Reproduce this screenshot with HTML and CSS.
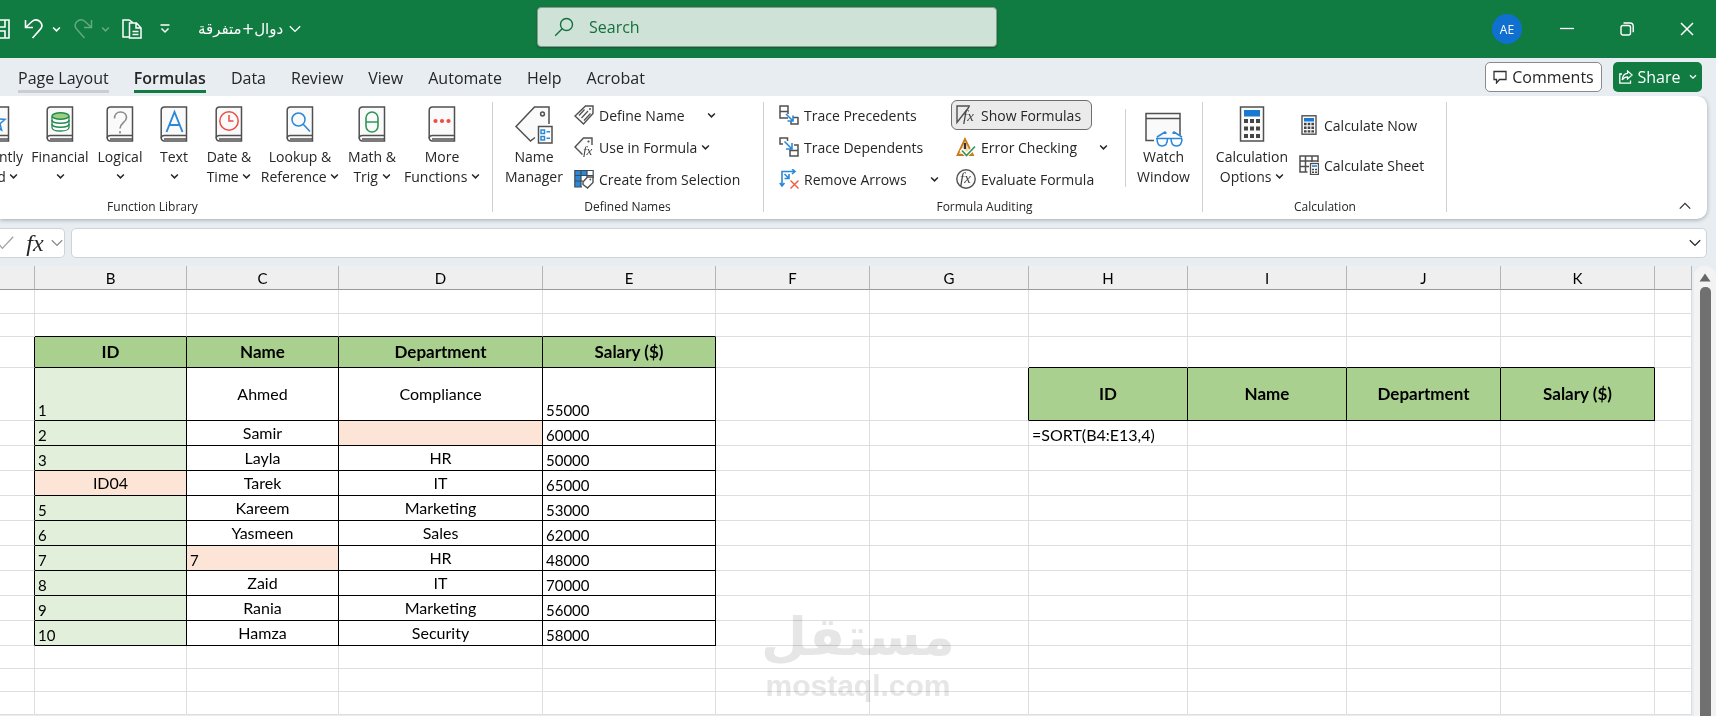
FILE: index.html
```html
<!DOCTYPE html>
<html lang="en">
<head>
    <meta charset="UTF-8">
    <meta name="viewport" content="width=device-width, initial-scale=1.0">
    <title>دوال+متفرقة - Excel</title>
    <link rel="stylesheet" href="styles.css">
</head>
<body>
    <!-- Shared icon shapes -->
    <svg class="defs" aria-hidden="true">
        <symbol id="chevron" viewBox="0 0 8 6"><path d="M1 1.2l3 3 3-3" fill="none" stroke="currentColor" stroke-width="1.3"/></symbol>
        <symbol id="chevron-wide" viewBox="0 0 12 8"><path d="M.8 1.2L6 6.4l5.2-5.2" fill="none" stroke="currentColor" stroke-width="1.3"/></symbol>
        <symbol id="book" viewBox="0 0 28 36">
            <path d="M4.500 1H26.500V35H4.500C2.500 35 1.200 33.700 1.200 31.800V4.200C1.200 2.200 2.500 1 4.500 1z" fill="#fafafa" stroke="#505050" stroke-width="1.500"/>
            <path d="M1.200 32.500C1.200 30.500 2.500 29.500 4.500 29.500H26.500M4 33H26" fill="none" stroke="#505050" stroke-width="1.400"/>
        </symbol>
    </svg>

    <header class="titlebar">
        <div class="quick">
            <button class="qbtn save" aria-label="Save"><svg viewBox="0 0 20 20"><path d="M1 1h18v18H4l-3-3zM5 1v7h10V1M5 19v-7h10v7" fill="none" stroke="#fff" stroke-width="1.600"/></svg></button>
            <button class="qbtn undo" aria-label="Undo"><svg viewBox="0 0 20 20"><path d="M1.500 1v7.500H9M2 8L8 2.500C11 0 14 .8 16 2.600c2.500 2.500 2.500 5.500 0 8L8.500 19" fill="none" stroke="#fff" stroke-width="1.600"/></svg></button>
            <button class="qdrop" aria-label="Undo list"><svg><use href="#chevron"/></svg></button>
            <button class="qbtn redo" aria-label="Redo"><svg viewBox="0 0 20 20"><path d="M18.500 1v7.500H11M18 8l-6-5.500C9 0 6 .8 4 2.600c-2.500 2.500-2.500 5.500 0 8L11.500 19" fill="none" stroke="#fff" stroke-width="1.400"/></svg></button>
            <button class="qdrop redo" aria-label="Redo list"><svg><use href="#chevron"/></svg></button>
            <button class="qbtn paste" aria-label="Paste"><svg viewBox="0 0 20 20"><path d="M7 18H1V1h6l3 2v1" fill="none" stroke="#fff" stroke-width="1.500"/><path d="M7.500 4h7l4.500 5v10H7.500zM14 4.500V9h4.500M10.500 12.500h6M10.500 15.500h6" fill="none" stroke="#fff" stroke-width="1.500"/></svg></button>
            <button class="qbtn more" aria-label="Customize Quick Access Toolbar"><svg viewBox="0 0 10 10"><path d="M.5 1h9M1.500 4.500L5 8l3.500-3.500" fill="none" stroke="#fff" stroke-width="1.500"/></svg></button>
            <button class="filename"><span lang="ar" dir="rtl">دوال+متفرقة</span><svg><use href="#chevron-wide"/></svg></button>
        </div>
        <label class="search">
            <svg viewBox="0 0 20 20"><circle cx="12.500" cy="7.500" r="6" fill="none" stroke="#16703c" stroke-width="1.400"/><path d="M8.200 11.800L1.200 18.800" stroke="#16703c" stroke-width="1.400"/></svg>
            <input type="text" placeholder="Search" aria-label="Search">
        </label>
        <div class="window-tools">
            <button class="avatar" aria-label="Account">AE</button>
            <button class="win" aria-label="Minimize"><svg viewBox="0 0 14 14"><path d="M0 6.500h14" stroke="#fff" stroke-width="1.300"/></svg></button>
            <button class="win" aria-label="Restore"><svg viewBox="0 0 14 14"><rect x="1" y="3.500" width="9.500" height="9.500" rx="2" fill="none" stroke="#fff" stroke-width="1.400"/><path d="M3.500 1h6.500c2 0 3.200 1.200 3.200 3.200v6" fill="none" stroke="#fff" stroke-width="1.400"/></svg></button>
            <button class="win" aria-label="Close"><svg viewBox="0 0 14 14"><path d="M1 1l12 12M13 1L1 13" stroke="#fff" stroke-width="1.500"/></svg></button>
        </div>
    </header>

    <nav class="tabs">
        <button class="tab hovered">Page Layout</button>
        <button class="tab active">Formulas</button>
        <button class="tab">Data</button>
        <button class="tab">Review</button>
        <button class="tab">View</button>
        <button class="tab">Automate</button>
        <button class="tab">Help</button>
        <button class="tab">Acrobat</button>
        <button class="comments"><svg viewBox="0 0 14 14"><path d="M1 1.500h12v8H6.500L3.500 13V9.500H1z" fill="none" stroke="#333" stroke-width="1.300"/></svg>Comments</button>
        <button class="share"><svg viewBox="0 0 14 14"><path d="M3 4H.8v9.200h10.700V10.500" fill="none" stroke="#fff" stroke-width="1.300"/><path d="M8.500 1l4.700 4-4.700 4V6.800C6 6.800 4.800 7.500 3.200 10 3.500 6 5.500 3.500 8.500 3.300z" fill="none" stroke="#fff" stroke-width="1.200"/></svg>Share<svg class="chev"><use href="#chevron"/></svg></button>
    </nav>

    <section class="ribbon" aria-label="Formulas ribbon">
        <div class="group library">
            <div class="group-body">
                <button class="big"><svg class="icon" viewBox="0 0 28 36"><use href="#book"/><path d="M14 7l2.500 6 6.500.4-5 4.300 1.600 6.300L14 20.500 8.400 24 10 17.700l-5-4.300 6.500-.4z" fill="none" stroke="#2b88d8" stroke-width="1.500"/></svg>Recently<span>Used <svg class="chev"><use href="#chevron"/></svg></span></button>
                <button class="big"><svg class="icon" viewBox="0 0 28 36"><use href="#book"/><path d="M6 10v11.500c0 2 3.500 3.500 8.500 3.500s8.500-1.500 8.500-3.500V10" fill="#fff" stroke="#218d51" stroke-width="1.300"/><ellipse cx="14.500" cy="10" rx="8.500" ry="3.200" fill="#9fcf7c" stroke="#218d51" stroke-width="1.400"/><path d="M6 14c0 2 3.500 3.200 8.500 3.200S23 16 23 14M6 18c0 2 3.500 3.200 8.500 3.200S23 20 23 18" fill="none" stroke="#218d51" stroke-width="1.500"/></svg>Financial<span><svg class="chev"><use href="#chevron"/></svg></span></button>
                <button class="big"><svg class="icon" viewBox="0 0 28 36"><use href="#book"/><path d="M8.500 12.500c0-4 2.500-6.500 6-6.500s6 2.300 6 5.500c0 5-6.500 5.500-6.500 11M14 25v2.500" fill="none" stroke="#8a8a8a" stroke-width="1.600"/></svg>Logical<span><svg class="chev"><use href="#chevron"/></svg></span></button>
                <button class="big"><svg class="icon" viewBox="0 0 28 36"><use href="#book"/><path d="M6.500 26L14.500 6l8 20M9.300 19h10.400" fill="none" stroke="#2b88d8" stroke-width="1.900"/></svg>Text<span><svg class="chev"><use href="#chevron"/></svg></span></button>
                <button class="big"><svg class="icon" viewBox="0 0 28 36"><use href="#book"/><circle cx="14" cy="15" r="9.200" fill="none" stroke="#ee4b42" stroke-width="1.500"/><path d="M14 9v6h4.500" fill="none" stroke="#ee4b42" stroke-width="1.500"/></svg>Date &amp;<span>Time <svg class="chev"><use href="#chevron"/></svg></span></button>
                <button class="big"><svg class="icon" viewBox="0 0 28 36"><use href="#book"/><circle cx="12.500" cy="13.500" r="6.500" fill="none" stroke="#2b88d8" stroke-width="1.500"/><path d="M17 18l7 7.500" stroke="#2b88d8" stroke-width="1.600"/></svg>Lookup &amp;<span>Reference <svg class="chev"><use href="#chevron"/></svg></span></button>
                <button class="big"><svg class="icon" viewBox="0 0 28 36"><use href="#book"/><rect x="8" y="6" width="12" height="20" rx="6" fill="none" stroke="#2f9658" stroke-width="1.600"/><path d="M8 16h12" stroke="#2f9658" stroke-width="1.500"/></svg>Math &amp;<span>Trig <svg class="chev"><use href="#chevron"/></svg></span></button>
                <button class="big"><svg class="icon" viewBox="0 0 28 36"><use href="#book"/><g fill="#ee4b42"><circle cx="7.500" cy="15" r="2.100"/><circle cx="14" cy="15" r="2.100"/><circle cx="20.500" cy="15" r="2.100"/></g></svg>More<span>Functions <svg class="chev"><use href="#chevron"/></svg></span></button>
            </div>
            <div class="group-label">Function Library</div>
        </div>

        <div class="group names">
            <div class="group-body">
                <button class="big"><svg class="icon wide" viewBox="0 0 38 38"><path d="M20 31.500L15.500 35 1 20.500 19.500 1H34v17" fill="#fafafa" stroke="#505050" stroke-width="1.500"/><circle cx="27.500" cy="8" r="1.900" fill="none" stroke="#505050" stroke-width="1.500"/><rect x="23.500" y="20.500" width="13.500" height="16.500" fill="#fff" stroke="#505050" stroke-width="1.500"/><path d="M26 24h3.500v3.500H26zM26 30.500h3.500V34H26zM31.500 25.800h3.500M31.500 32.300h3.500" fill="none" stroke="#2b88d8" stroke-width="1.500"/></svg>Name<span>Manager</span></button>
                <div class="stack">
                    <button class="small spread"><svg class="sicon" viewBox="0 0 20 20"><path d="M11.500 1H19v7.500L9.500 19 1 11z" fill="#fafafa" stroke="#505050" stroke-width="1.400"/><path d="M5 10.500l5.500-6M7.500 13l6.500-7M10 15.500l6.500-7" stroke="#505050" stroke-width="1.200"/><circle cx="16" cy="4" r="1" fill="#505050"/></svg>Define Name<svg class="chev"><use href="#chevron"/></svg></button>
                    <button class="small"><svg class="sicon" viewBox="0 0 20 20"><path d="M8.500 17.500L1 10 9.500 1H18v7" fill="#fafafa" stroke="#505050" stroke-width="1.400"/><circle cx="14.500" cy="4.500" r="1.100" fill="#505050"/><text x="9" y="18" class="fx-small">fx</text></svg>Use in Formula<svg class="chev near"><use href="#chevron"/></svg></button>
                    <button class="small"><svg class="sicon" viewBox="0 0 20 20"><path d="M1 1h18v17H1z" fill="#fff"/><path d="M1 1h12v5H1zM1 6h6v12H1z" fill="#2b88d8"/><path d="M.8 1.500h18.400V9M.8 1v17H8M.8 6.500h18.400M.8 12H9M7 1v17M13 1v7" fill="none" stroke="#3d4a55" stroke-width="1.200"/><path d="M13.500 8H19v5.500L13.500 19 9 15.500V13z" fill="#fff" stroke="#505050" stroke-width="1.400"/><circle cx="16.300" cy="10.500" r=".9" fill="#505050"/></svg>Create from Selection</button>
                </div>
            </div>
            <div class="group-label">Defined Names</div>
        </div>

        <div class="group auditing">
            <div class="group-body">
                <div class="stack">
                    <button class="small"><svg class="sicon" viewBox="0 0 20 20"><path d="M9 13H1V1h8v8M1 6.500h8M19 12v7h-7v-3M14 12.500h5" fill="none" stroke="#505050" stroke-width="1.500"/><path d="M7 9l6.500 6.500M14 10.500V16H8.500" fill="none" stroke="#2b88d8" stroke-width="1.600"/></svg>Trace Precedents</button>
                    <button class="small"><svg class="sicon" viewBox="0 0 20 20"><path d="M4 7H1V1h7.500v3M15 8h4v11h-8v-7M11 13.500h8" fill="none" stroke="#505050" stroke-width="1.500"/><path d="M5.500 4.500l7 7M13 6v6H7" fill="none" stroke="#2b88d8" stroke-width="1.600"/></svg>Trace Dependents</button>
                    <button class="small spread"><svg class="sicon" viewBox="0 0 20 20"><path d="M3 17V2.500h13M13 0l3 2.500L13 5M.8 14L3 17l2.500-3M5.500 5l4 4M10 5v4.500H5.500" fill="none" stroke="#2b88d8" stroke-width="1.600"/><path d="M11.500 11.500l8 8M19.500 11.500l-8 8" stroke="#ee5a3a" stroke-width="1.400"/></svg>Remove Arrows<svg class="chev"><use href="#chevron"/></svg></button>
                </div>
                <div class="stack">
                    <button class="small pressed"><svg class="sicon" viewBox="0 0 20 20"><path d="M14 1H1v16.500L13 2" fill="none" stroke="#505050" stroke-width="1.400"/><text x="7" y="16" class="fx-medium">fx</text></svg>Show Formulas</button>
                    <button class="small spread"><svg class="sicon" viewBox="0 0 20 20"><path d="M9 2L1.500 18H17z" fill="#f8d9ae" stroke="#c97a1b" stroke-width="1.800"/><path d="M9 6v6" stroke="#333" stroke-width="2.200"/><path d="M5 12.500l5.500 5.500L19 10" fill="none" stroke="#fff" stroke-width="4"/><path d="M6 13.500l4.500 5 8.500-9" fill="none" stroke="#2f9658" stroke-width="1.600"/></svg>Error Checking<svg class="chev"><use href="#chevron"/></svg></button>
                    <button class="small"><svg class="sicon" viewBox="0 0 20 20"><circle cx="10" cy="10" r="9.200" fill="#fafafa" stroke="#505050" stroke-width="1.400"/><text x="4" y="14" class="fx-medium">fx</text></svg>Evaluate Formula</button>
                </div>
                <button class="big watch"><svg class="icon wide" viewBox="0 0 38 38"><path d="M9 31.500H1V4.500h34V26" fill="#fafafa" stroke="#505050" stroke-width="1.500"/><path d="M1 9.500h34" stroke="#505050" stroke-width="1.500"/><path d="M11 29.500h26M12 29.500c0 5 1.500 7.500 5 7.500s5.500-2.500 5.500-7.500M26 29.500c0 5 1.500 7.500 5.500 7.500s5.500-2.500 5.500-7.500M12 28l8-5 1.500 1.500M37 28l-8-5-1.500 1.500" fill="none" stroke="#2b88d8" stroke-width="1.500"/></svg>Watch<span>Window</span></button>
            </div>
            <div class="group-label">Formula Auditing</div>
        </div>

        <div class="group calc">
            <div class="group-body">
                <button class="big"><svg class="icon" viewBox="0 0 28 36"><rect x="2.500" y="1" width="23" height="34" fill="#fafafa" stroke="#505050" stroke-width="1.500"/><path d="M6 4h16v6.500H6z" fill="#1779cf"/><path d="M6 15h16M6 22.500h16M6 30h16" stroke="#444" stroke-width="4" stroke-dasharray="4 2"/></svg>Calculation<span>Options <svg class="chev"><use href="#chevron"/></svg></span></button>
                <div class="stack pair">
                    <button class="small"><svg class="sicon" viewBox="0 0 20 20"><rect x="3" y=".8" width="14" height="18.400" fill="#fafafa" stroke="#505050" stroke-width="1.400"/><path d="M5 3h10v3.500H5z" fill="#1779cf"/><path d="M5 9h10M5 12.700h10M5 16.400h10" stroke="#444" stroke-width="2.400" stroke-dasharray="2.600 1.100"/></svg>Calculate Now</button>
                    <button class="small"><svg class="sicon" viewBox="0 0 20 20"><path d="M19 7V1H1v16h7.500M1 6h18M1 11.500h9M6.500 1v16M13 1v6" fill="none" stroke="#505050" stroke-width="1.500"/><rect x="11.500" y="8.500" width="8" height="11" fill="#fff" stroke="#505050" stroke-width="1.300"/><path d="M13 10.300h5v1.500h-5z" fill="#1779cf"/><path d="M13 14.500h5M13 17.200h5" stroke="#444" stroke-width="1.500" stroke-dasharray="2 1"/></svg>Calculate Sheet</button>
                </div>
            </div>
            <div class="group-label">Calculation</div>
        </div>
        <button class="collapse" aria-label="Collapse the ribbon"><svg viewBox="0 0 12 8"><path d="M.8 6.600L6 1.400l5.200 5.200" fill="none" stroke="#333" stroke-width="1.300"/></svg></button>
    </section>

    <div class="formula-bar">
        <div class="fx-box">
            <button aria-label="Enter"><svg class="tick" viewBox="0 0 20 16"><path d="M2 9l4 5L18 1" fill="none" stroke="#a0a0a0" stroke-width="1.400"/></svg></button>
            <button class="fx" aria-label="Insert Function">fx</button>
            <button aria-label="Function list"><svg class="wide-chev grey"><use href="#chevron-wide"/></svg></button>
        </div>
        <div class="fx-input">
            <input type="text" aria-label="Formula bar">
            <button aria-label="Expand formula bar"><svg class="wide-chev"><use href="#chevron-wide"/></svg></button>
        </div>
    </div>

    <main class="workspace">
        <table class="sheet">
            <colgroup>
                <col class="w-a"><col class="w-b"><col class="w-b"><col class="w-d"><col class="w-e"><col class="w-f">
                <col class="w-g"><col class="w-g"><col class="w-g"><col class="w-f"><col class="w-f"><col>
            </colgroup>
            <thead>
                <tr><th></th><th>B</th><th>C</th><th>D</th><th>E</th><th>F</th><th>G</th><th>H</th><th>I</th><th>J</th><th>K</th><th></th></tr>
            </thead>
            <tbody>
                <tr class="first"><td></td><td></td><td></td><td></td><td></td><td></td><td></td><td></td><td></td><td></td><td></td><td></td></tr>
                <tr class="short"><td></td><td class="below"></td><td class="below"></td><td class="below"></td><td class="below"></td><td></td><td></td><td></td><td></td><td></td><td></td><td></td></tr>
                <tr class="heading"><td class="beside"></td><td class="box head">ID</td><td class="box head">Name</td><td class="box head">Department</td><td class="box head">Salary ($)</td><td></td><td></td><td class="below"></td><td class="below"></td><td class="below"></td><td class="below"></td><td></td></tr>
                <tr class="tall"><td class="beside"></td><td class="box num green">1</td><td class="box">Ahmed</td><td class="box">Compliance</td><td class="box num">55000</td><td></td><td class="beside"></td><td class="box head">ID</td><td class="box head">Name</td><td class="box head">Department</td><td class="box head">Salary ($)</td><td></td></tr>
                <tr><td class="beside"></td><td class="box num green">2</td><td class="box">Samir</td><td class="box peach"></td><td class="box num">60000</td><td></td><td></td><td class="formula">=SORT(B4:E13,4)</td><td></td><td></td><td></td><td></td></tr>
                <tr><td class="beside"></td><td class="box num green">3</td><td class="box">Layla</td><td class="box">HR</td><td class="box num">50000</td><td></td><td></td><td></td><td></td><td></td><td></td><td></td></tr>
                <tr><td class="beside"></td><td class="box peach">ID04</td><td class="box">Tarek</td><td class="box">IT</td><td class="box num">65000</td><td></td><td></td><td></td><td></td><td></td><td></td><td></td></tr>
                <tr><td class="beside"></td><td class="box num green">5</td><td class="box">Kareem</td><td class="box">Marketing</td><td class="box num">53000</td><td></td><td></td><td></td><td></td><td></td><td></td><td></td></tr>
                <tr><td class="beside"></td><td class="box num green">6</td><td class="box">Yasmeen</td><td class="box">Sales</td><td class="box num">62000</td><td></td><td></td><td></td><td></td><td></td><td></td><td></td></tr>
                <tr><td class="beside"></td><td class="box num green">7</td><td class="box num peach">7</td><td class="box">HR</td><td class="box num">48000</td><td></td><td></td><td></td><td></td><td></td><td></td><td></td></tr>
                <tr><td class="beside"></td><td class="box num green">8</td><td class="box">Zaid</td><td class="box">IT</td><td class="box num">70000</td><td></td><td></td><td></td><td></td><td></td><td></td><td></td></tr>
                <tr><td class="beside"></td><td class="box num green">9</td><td class="box">Rania</td><td class="box">Marketing</td><td class="box num">56000</td><td></td><td></td><td></td><td></td><td></td><td></td><td></td></tr>
                <tr><td class="beside"></td><td class="box num green">10</td><td class="box">Hamza</td><td class="box">Security</td><td class="box num">58000</td><td></td><td></td><td></td><td></td><td></td><td></td><td></td></tr>
                <tr class="short"><td></td><td></td><td></td><td></td><td></td><td></td><td></td><td></td><td></td><td></td><td></td><td></td></tr>
                <tr class="short"><td></td><td></td><td></td><td></td><td></td><td></td><td></td><td></td><td></td><td></td><td></td><td></td></tr>
                <tr class="short"><td></td><td></td><td></td><td></td><td></td><td></td><td></td><td></td><td></td><td></td><td></td><td></td></tr>
            </tbody>
        </table>
        <div class="scrollbar">
            <svg viewBox="0 0 12 9"><path d="M6 .5L11.500 8.500H.5z" fill="#666"/></svg>
            <div class="thumb"></div>
        </div>
        <div class="watermark">
            <span class="mark-ar" lang="ar" dir="rtl">مستقل</span>
            <span class="mark-en">mostaql.com</span>
        </div>
    </main>
</body>
</html>
```
FILE: styles.css
```css
* {
    margin: 0;
    padding: 0;
    box-sizing: border-box;
}

body {
    height: 100vh;
    display: flex;
    flex-direction: column;
    overflow: hidden;
    background: #e7edf1;
    color: #262626;
    font-family: "Open Sans", "Noto Sans", sans-serif;
    font-size: 14px;
}

button {
    border: none;
    background: none;
    color: inherit;
    font: inherit;
    white-space: nowrap;
}

input {
    border: none;
    outline: none;
    background: none;
    font: inherit;
}

svg {
    display: block;
    flex: none;
}

.defs {
    position: absolute;
    width: 0;
    height: 0;
}

/* Title bar */
.titlebar {
    flex: none;
    display: flex;
    align-items: center;
    height: 58px;
    background: #107c41;
    color: #fff;
}

.quick {
    flex: none;
    display: flex;
    align-items: center;
    width: 537px;
    height: 56px;
}

.qbtn svg {
    width: 20px;
    height: 20px;
}

.qdrop {
    margin: 0 12px 0 8px;
}

.qdrop svg {
    width: 9px;
    height: 7px;
}

.save {
    margin-left: -10px;
    margin-right: 14px;
}

.redo {
    opacity: 0.35;
}

.more {
    margin: 0 28px 0 18px;
}

.more svg {
    width: 10px;
    height: 10px;
}

.filename {
    display: flex;
    align-items: center;
    gap: 6px;
    font-family: "DejaVu Sans", sans-serif;
    font-size: 15px;
}

.filename svg {
    width: 12px;
    height: 8px;
}

.search {
    display: flex;
    align-items: center;
    gap: 15px;
    width: 460px;
    height: 40px;
    padding: 0 16px;
    margin-bottom: 4px;
    border: 1px solid #8a9a90;
    border-radius: 4px;
    background: #cee2d7;
    box-shadow: 0 1px 2px rgba(0,0,0,0.3);
}

.search svg {
    width: 20px;
    height: 20px;
}

.search input {
    flex: 1;
    min-width: 0;
    font-size: 16px;
}

.search input::placeholder {
    color: #16703c;
    opacity: 1;
}

.window-tools {
    display: flex;
    align-items: center;
    margin-left: auto;
    padding-right: 22px;
    height: 56px;
}

.avatar {
    width: 30px;
    height: 30px;
    margin-right: 38px;
    border-radius: 50%;
    background: #0f70cf;
    font-size: 12px;
}

.win + .win {
    margin-left: 46px;
}

.win svg {
    width: 14px;
    height: 14px;
}

/* Ribbon tabs */
.tabs {
    flex: none;
    display: flex;
    align-items: center;
    gap: 25px;
    height: 38px;
    padding: 0 14px 0 18px;
    font-size: 16px;
}

.tab {
    height: 32px;
    padding-top: 4px;
    border-bottom: 3px solid transparent;
}

.tab.hovered {
    border-color: #cbcdcf;
}

.tab.active {
    border-color: #107c41;
    font-weight: 600;
}

.comments,
.share {
    display: flex;
    align-items: center;
    justify-content: center;
    gap: 5px;
    height: 30px;
    border-radius: 5px;
}

.comments {
    width: 117px;
    margin-left: auto;
    margin-right: -14px;
    border: 1px solid #8a8a8a;
    background: #fff;
}

.share {
    width: 89px;
    background: #107c41;
    color: #fff;
}

.comments svg,
.share svg {
    width: 14px;
    height: 14px;
}

.share .chev {
    width: 8px;
    height: 6px;
    margin-left: 3px;
}

/* Ribbon */
.ribbon {
    flex: none;
    position: relative;
    display: flex;
    height: 123px;
    margin-right: 9px;
    border-radius: 0 10px 10px 0;
    background: #fff;
    box-shadow: 0 1px 4px rgba(0,0,0,0.3);
    clip-path: inset(0 -9px -9px 0);
}

.group {
    flex: none;
    position: relative;
    display: flex;
    flex-direction: column;
    padding-top: 4px;
}

/* Line between groups */
.group::after {
    content: "";
    position: absolute;
    top: 6px;
    right: 0;
    width: 1px;
    height: 110px;
    background: #d0d0d0;
}

.group-body {
    display: flex;
    height: 97px;
}

.group-label {
    text-align: center;
    font-size: 12px;
    line-height: 20px;
}

.library {
    width: 681px;
    margin-left: -188px;
}

.library .group-body {
    display: grid;
    grid-template-columns: 61px 68px 52px 56px 54px 88px 56px 84px;
    justify-content: end;
    padding-right: 9px;
}

.names {
    width: 271px;
    padding-left: 6px;
}

.auditing {
    width: 439px;
    padding-left: 10px;
}

.calc {
    width: 244px;
    padding-left: 8px;
}

.names .group-label,
.auditing .group-label,
.calc .group-label {
    padding-right: 8px;
}

.chev {
    display: inline-block;
    width: 9px;
    height: 7px;
    vertical-align: 2px;
}

.big {
    display: flex;
    flex-direction: column;
    align-items: center;
    padding-top: 6px;
    line-height: 20px;
}

.names .big {
    width: 70px;
}

.calc .big {
    width: 82px;
}

.icon {
    width: 28px;
    height: 36px;
    margin-bottom: 5px;
}

.icon.wide {
    width: 38px;
    height: 38px;
    margin-bottom: 3px;
}

.big span {
    min-height: 20px;
}

.stack {
    display: grid;
    grid-template-rows: repeat(3, 30px);
    align-content: start;
    gap: 2px;
    justify-items: start;
}

.stack.pair {
    grid-template-rows: repeat(2, 30px);
    gap: 10px;
    padding: 10px 0 0 1px;
}

.small {
    display: flex;
    align-items: center;
    height: 30px;
    padding: 0 4px;
    border: 1px solid transparent;
    border-radius: 6px;
}

.small.spread {
    width: 152px;
}

.small.spread .chev {
    margin-left: auto;
}

.auditing .small.spread {
    width: 170px;
}

.small .near {
    margin-left: 4px;
}

.auditing .stack + .stack {
    margin-left: 7px;
}

.auditing .stack + .stack .spread {
    width: 162px;
}

.sicon {
    width: 20px;
    height: 20px;
    margin-right: 5px;
}

.pressed {
    padding-right: 10px;
    border-color: #6e6e6e;
    background: #ebebeb;
}

.watch {
    width: 76px;
    height: 78px;
    margin: 9px 0 0 12px;
    padding-top: 0;
    border-left: 1px solid #d0d0d0;
}

.watch .icon {
    margin-bottom: 0;
}

.fx-small,
.fx-medium {
    fill: #404040;
    font-family: "Liberation Serif", serif;
    font-style: italic;
    font-size: 13px;
}

.fx-medium {
    font-size: 15px;
}

.collapse {
    margin: auto 16px 9px auto;
}

.collapse svg {
    width: 12px;
    height: 8px;
}

/* Formula bar */
.formula-bar {
    flex: none;
    display: flex;
    gap: 6px;
    padding: 9px 9px 8px 0;
}

.fx-box,
.fx-input {
    display: flex;
    align-items: center;
    height: 30px;
    border: 1px solid #cfd3d6;
    border-radius: 5px;
    background: #fff;
}

.fx-box {
    width: 65px;
    border-left: none;
    border-radius: 0 5px 5px 0;
}

.tick {
    width: 18px;
    height: 16px;
    margin-left: -3px;
}

.fx {
    width: 36px;
    padding-left: 4px;
    font-family: "Liberation Serif", serif;
    font-style: italic;
    font-size: 24px;
    line-height: 24px;
}

.wide-chev {
    width: 12px;
    height: 8px;
}

.grey {
    color: #8a8a8a;
}

.fx-input {
    flex: 1;
    padding: 0 5px;
}

.fx-input input {
    flex: 1;
    height: 28px;
}

/* Worksheet */
.workspace {
    flex: 1;
    min-height: 0;
    position: relative;
    display: flex;
    align-items: stretch;
    overflow: hidden;
}

.sheet {
    flex: 1;
    align-self: flex-start;
    width: 0;
    table-layout: fixed;
    border-collapse: separate;
    border-spacing: 0;
    background: #fff;
    color: #000;
    font-family: Lato, sans-serif;
    font-size: 16px;
    line-height: 20px;
}

.w-a { width: 35px; }
.w-b { width: 152px; }
.w-d { width: 204px; }
.w-e { width: 173px; }
.w-f { width: 154px; }
.w-g { width: 159px; }

.sheet th {
    height: 24px;
    border-right: 1px solid #b4b4b4;
    border-bottom: 1px solid #999;
    background: #efefef;
    font-size: 15px;
    font-weight: 400;
}

.sheet td {
    height: 25px;
    padding: 0 3px;
    border-right: 1px solid #dedede;
    border-bottom: 1px solid #dedede;
    text-align: center;
    vertical-align: middle;
    white-space: nowrap;
}

.sheet .first td { height: 24px; }
.sheet .short td { height: 23px; }
.sheet .heading td { height: 31px; }
.sheet .tall td { height: 53px; }

.sheet .box {
    border-color: #000;
}

.sheet .below {
    border-bottom-color: #000;
}

.sheet .beside {
    border-right-color: #000;
}

.sheet .num,
.sheet .formula {
    text-align: left;
    vertical-align: bottom;
}

.sheet .num {
    font-size: 15px;
}

.sheet .head {
    background: #a9d08e;
    font-size: 17px;
    font-weight: 700;
}

.green {
    background: #e2efda;
}

.peach {
    background: #fce4d6;
}

.scrollbar {
    display: flex;
    flex-direction: column;
    align-items: center;
    gap: 5px;
    width: 22px;
    margin-left: 2px;
    padding-top: 7px;
    border-radius: 10px 10px 0 0;
    background: #f3f3f3;
}

.scrollbar svg {
    width: 12px;
    height: 9px;
}

.thumb {
    flex: 1;
    width: 11px;
    border-radius: 5px 5px 0 0;
    background: #707070;
}

/* Watermark lies over the cells */
.watermark {
    position: absolute;
    left: 765px;
    top: 337px;
    width: 186px;
    display: flex;
    flex-direction: column;
    align-items: center;
    color: #e6e6e6;
    font-weight: 700;
    mix-blend-mode: multiply;
    pointer-events: none;
}

.mark-ar {
    font-family: "DejaVu Sans", sans-serif;
    font-size: 53px;
    line-height: 68px;
}

.mark-en {
    font-family: "Liberation Sans", sans-serif;
    font-size: 30px;
    line-height: 30px;
}
```
